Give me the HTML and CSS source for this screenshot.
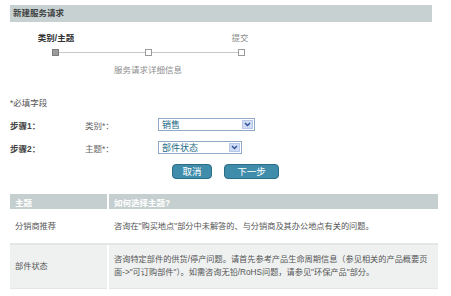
FILE: index.html
```html
<!DOCTYPE html>
<html lang="zh-CN">
<head>
  <meta charset="UTF-8">
  <title>新建服务请求</title>
  <link rel="stylesheet" href="styles.css">
</head>
<body>
  <div class="page">
    <!-- Title bar -->
    <div class="title-bar">新建服务请求</div>

    <!-- Progress steps -->
    <div class="steps">
      <div class="step-labels">
        <span class="current">类别/主题</span>
        <span></span>
        <span class="todo">提交</span>
      </div>
      <div class="track">
        <span class="mark done"></span>
        <span class="line"></span>
        <span class="mark"></span>
        <span class="line"></span>
        <span class="mark"></span>
      </div>
      <div class="step-labels">
        <span></span>
        <span class="todo">服务请求详细信息</span>
        <span></span>
      </div>
    </div>

    <!-- Form -->
    <p class="required">*必填字段</p>
    <div class="form-row">
      <span class="step-name">步骤1：</span>
      <span class="field-name">类别*：</span>
      <span class="select wide">
        <span class="value">销售</span>
        <span class="arrow"><svg width="7" height="5" viewBox="0 0 7 5"><path d="M1 1 L3.5 3.5 L6 1" fill="none" stroke="#2a4f9a" stroke-width="1.4"/></svg></span>
      </span>
    </div>
    <div class="form-row">
      <span class="step-name">步骤2：</span>
      <span class="field-name">主题*：</span>
      <span class="select">
        <span class="value">部件状态</span>
        <span class="arrow"><svg width="7" height="5" viewBox="0 0 7 5"><path d="M1 1 L3.5 3.5 L6 1" fill="none" stroke="#2a4f9a" stroke-width="1.4"/></svg></span>
      </span>
    </div>
    <div class="actions">
      <a href="#" class="btn">取消</a>
      <a href="#" class="btn btn-next">下一步</a>
    </div>

    <!-- Help table -->
    <table class="topics">
      <tr>
        <th class="col-topic">主题</th>
        <th>如何选择主题?</th>
      </tr>
      <tr class="row-plain">
        <td class="col-topic">分销商推荐</td>
        <td>咨询在"购买地点"部分中未解答的、与分销商及其办公地点有关的问题。</td>
      </tr>
      <tr class="row-shade">
        <td class="col-topic">部件状态</td>
        <td class="nowrap">咨询特定部件的供货/停产问题。请首先参考产品生命周期信息（参见相关的产品概要页<br>面-&gt;"可订购部件"）。如需咨询无铅/RoHS问题，请参见"环保产品"部分。</td>
      </tr>
    </table>
  </div>
</body>
</html>
```

FILE: styles.css
```css
* {
  margin: 0;
  padding: 0;
  box-sizing: border-box;
}

body {
  font-family: "Liberation Sans", "Noto Sans CJK SC", sans-serif;
  font-size: 8.5px;
  color: #555;
  background: #fff;
}

.page {
  width: 451px;
  padding: 5px 14px 0 10px;
}

/* Title bar */
.title-bar {
  width: 422px;
  height: 17px;
  line-height: 17px;
  padding-left: 3px;
  background: #c8d1d1;
  color: #3f4444;
  font-weight: 700;
}

/* Steps */
.steps {
  width: 276px;
  margin-top: 10px;
}

.step-labels {
  display: grid;
  grid-template-columns: repeat(3, 92px);
  height: 12px;
  line-height: 12px;
  text-align: center;
}

.step-labels .current {
  color: #333;
  font-weight: 700;
}

.step-labels .todo {
  color: #8c8c8c;
}

.track {
  display: flex;
  align-items: center;
  margin: 5px 0 8px 42px;
}

.mark {
  width: 7px;
  height: 7px;
  border: 1px solid #9a9a9a;
  background: #fff;
}

.mark.done {
  background: #9b9b9b;
  border-color: #7d7d7d;
}

.line {
  width: 86px;
  height: 1px;
  background: #c8c8c8;
}

/* Form */
.required {
  margin-top: 21px;
  line-height: 12px;
  color: #555;
}

.form-row {
  display: flex;
  align-items: center;
  height: 13px;
  margin-top: 9px;
}

.form-row + .form-row {
  margin-top: 10px;
}

.step-name {
  width: 75px;
  font-weight: 700;
  color: #444;
}

.field-name {
  width: 73px;
  color: #666;
}

.select {
  display: flex;
  align-items: center;
  justify-content: space-between;
  width: 84px;
  height: 13px;
  border: 1px solid #8ea9c7;
  background: #fff;
  padding: 0 1px 0 3px;
}

.select.wide {
  width: 97px;
}

.select .value {
  color: #1d6c86;
  font-size: 9px;
}

.arrow {
  display: flex;
  align-items: center;
  justify-content: center;
  width: 11px;
  height: 9px;
  background: #cfdcf4;
  border: 1px solid #b7c8ea;
}

.actions {
  display: flex;
  gap: 12px;
  margin: 10px 0 0 162px;
}

.btn {
  display: inline-block;
  width: 40px;
  height: 15px;
  line-height: 13px;
  text-align: center;
  background: #3f8dab;
  border: 1px solid #2b6c86;
  border-radius: 4px;
  color: #fff;
  font-size: 9.5px;
  text-decoration: none;
}

.btn-next {
  width: 55px;
}

/* Topics table */
.topics {
  width: 428px;
  margin-top: 15px;
  border-collapse: collapse;
  table-layout: fixed;
}

.topics th,
.topics td {
  text-align: left;
  vertical-align: middle;
  padding: 0 5px;
}

.topics th + th,
.topics td + td {
  border-left: 2px solid #fff;
}

.topics .col-topic {
  width: 98px;
}

.topics th {
  height: 15px;
  background: #c6cfcf;
  color: #fff;
  font-weight: 700;
}

.topics td {
  color: #555;
  font-size: 8.2px;
  line-height: 13px;
}

.topics .nowrap {
  white-space: nowrap;
  overflow: hidden;
}

.row-plain td {
  height: 35px;
  border-bottom: 2px solid #e2e6e6;
}

.row-shade td {
  height: 44px;
  background: #eff1f1;
  border-bottom: 1px solid #e2e6e6;
}
```
